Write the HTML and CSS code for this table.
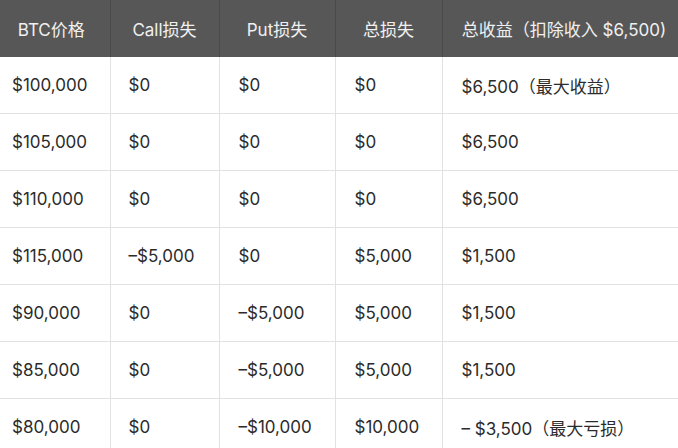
FILE: index.html
```html
<!DOCTYPE html>
<html lang="zh">
<head>
<meta charset="utf-8">
<link rel="stylesheet" href="styles.css">
</head>
<body>
<div class="wrap">
<table class="tbl">
  <colgroup>
    <col class="c1"><col class="c2"><col class="c3"><col class="c4"><col class="c5">
  </colgroup>
  <thead>
    <tr><th>BTC价格</th><th>Call损失</th><th>Put损失</th><th>总损失</th><th>总收益（扣除收入 $6,500)</th></tr>
  </thead>
  <tbody>
    <tr><td>$100,000</td><td>$0</td><td>$0</td><td>$0</td><td>$6,500（最大收益）</td></tr>
    <tr><td>$105,000</td><td>$0</td><td>$0</td><td>$0</td><td>$6,500</td></tr>
    <tr><td>$110,000</td><td>$0</td><td>$0</td><td>$0</td><td>$6,500</td></tr>
    <tr><td>$115,000</td><td>–$5,000</td><td>$0</td><td>$5,000</td><td>$1,500</td></tr>
    <tr><td>$90,000</td><td>$0</td><td>–$5,000</td><td>$5,000</td><td>$1,500</td></tr>
    <tr><td>$85,000</td><td>$0</td><td>–$5,000</td><td>$5,000</td><td>$1,500</td></tr>
    <tr><td>$80,000</td><td>$0</td><td>–$10,000</td><td>$10,000</td><td>– $3,500（最大亏损）</td></tr>
  </tbody>
</table>
</div>
</body>
</html>
```

FILE: styles.css
```css
html, body {
  margin: 0;
  padding: 0;
  background: #ffffff;
}
.wrap {
  width: 678px;
  height: 448px;
  overflow: hidden;
}
.tbl {
  border-collapse: collapse;
  table-layout: fixed;
  width: 693px;
  margin-left: -7px;
  font-family: "Inter", "Noto Sans CJK SC", sans-serif;
  font-size: 17px;
  color: #2b2b2b;
}
.c1 { width: 117px; }
.c2 { width: 109px; }
.c3 { width: 116px; }
.c4 { width: 107px; }
.c5 { width: 244px; }
.tbl th {
  background: #575757;
  color: #f0f0f0;
  font-weight: normal;
  text-align: center;
  height: 57px;
  padding: 0 4px;
  border-right: 1px solid #4a4a4a;
  white-space: nowrap;
}
.tbl td {
  height: 56px;
  padding: 0 0 0 19px;
  text-align: left;
  border-right: 1px solid #e2e2e2;
  border-bottom: 1px solid #e2e2e2;
  white-space: nowrap;
}
.tbl td:nth-child(2) {
  padding-left: 18px;
}
```
